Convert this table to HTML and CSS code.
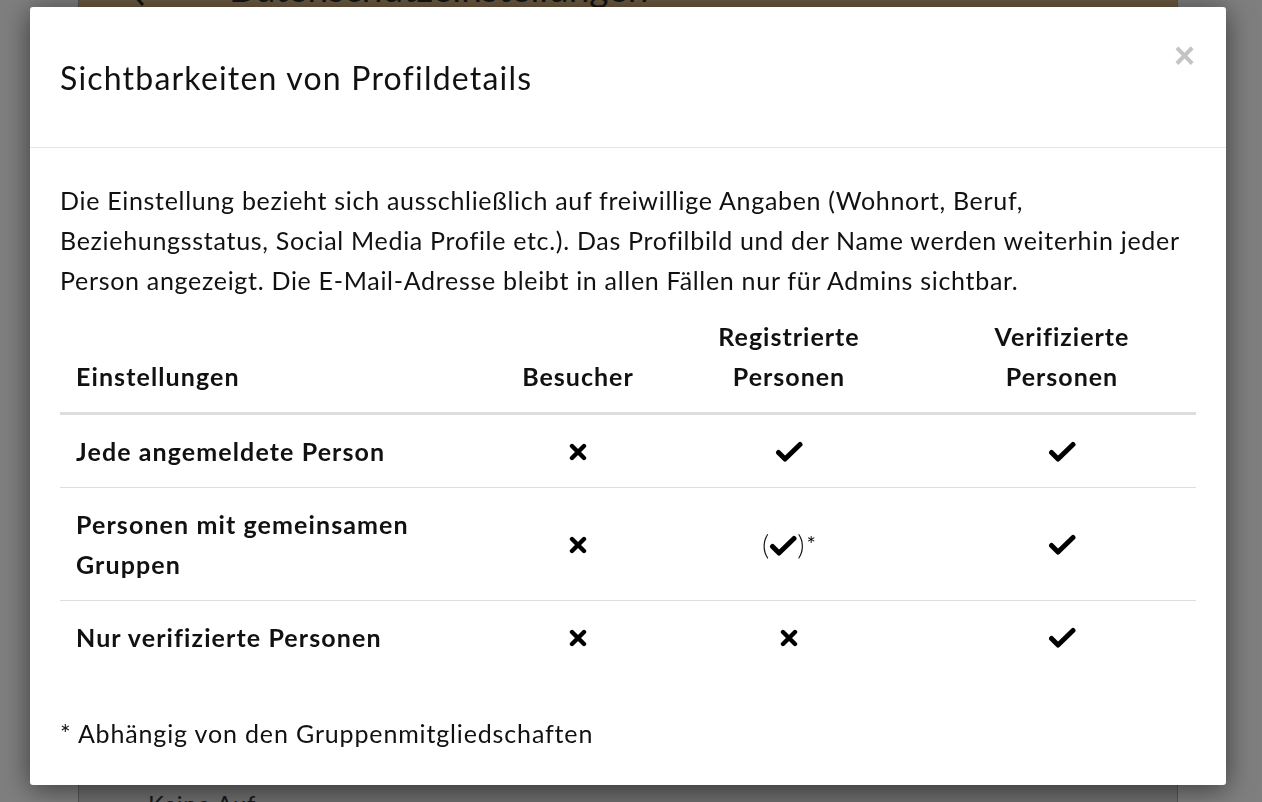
FILE: index.html
```html
<!DOCTYPE html>
<html lang="de">
<head>
<meta charset="utf-8">
<title>Sichtbarkeiten von Profildetails</title>
<link rel="stylesheet" href="styles.css">
</head>
<body>
<div class="page">
  <div class="page-card">
    <div class="page-head">
      <svg class="back" viewBox="0 0 24 40"><path d="M20 3L5 20L20 37"/></svg>
      <span class="page-title">Datenschutzeinstellungen</span>
    </div>
    <div class="page-body">
      <div class="page-row">Keine Auf</div>
    </div>
  </div>
</div>

<div class="modal">
  <div class="modal-header">
    <h4 class="modal-title">Sichtbarkeiten von Profildetails</h4>
    <button class="close" type="button">×</button>
  </div>
  <div class="modal-body">
    <p class="intro">Die Einstellung bezieht sich ausschließlich auf freiwillige Angaben (Wohnort, Beruf,<br>Beziehungsstatus, Social Media Profile etc.). Das Profilbild und der Name werden weiterhin jeder<br>Person angezeigt. Die E-Mail-Adresse bleibt in allen Fällen nur für Admins sichtbar.</p>
    <table class="vis-table">
      <thead>
        <tr>
          <th class="c1">Einstellungen</th>
          <th class="c2">Besucher</th>
          <th class="c3">Registrierte<br>Personen</th>
          <th class="c4">Verifizierte<br>Personen</th>
        </tr>
      </thead>
      <tbody>
        <tr>
          <td class="label">Jede angemeldete Person</td>
          <td><svg class="ic-x" viewBox="0 0 18 18"><path d="M3 3L15 15M15 3L3 15"/></svg></td>
          <td><svg class="ic-ok" viewBox="0 0 28 22"><path d="M3.5 11.5L10 18L25 3.5"/></svg></td>
          <td><svg class="ic-ok" viewBox="0 0 28 22"><path d="M3.5 11.5L10 18L25 3.5"/></svg></td>
        </tr>
        <tr>
          <td class="label">Personen mit gemeinsamen<br>Gruppen</td>
          <td><svg class="ic-x" viewBox="0 0 18 18"><path d="M3 3L15 15M15 3L3 15"/></svg></td>
          <td><span class="paren">(</span><svg class="ic-ok" viewBox="0 0 28 22"><path d="M3.5 11.5L10 18L25 3.5"/></svg><span class="paren">)</span><span class="star">*</span></td>
          <td><svg class="ic-ok" viewBox="0 0 28 22"><path d="M3.5 11.5L10 18L25 3.5"/></svg></td>
        </tr>
        <tr>
          <td class="label">Nur verifizierte Personen</td>
          <td><svg class="ic-x" viewBox="0 0 18 18"><path d="M3 3L15 15M15 3L3 15"/></svg></td>
          <td><svg class="ic-x" viewBox="0 0 18 18"><path d="M3 3L15 15M15 3L3 15"/></svg></td>
          <td><svg class="ic-ok" viewBox="0 0 28 22"><path d="M3.5 11.5L10 18L25 3.5"/></svg></td>
        </tr>
      </tbody>
    </table>
    <p class="note">* Abhängig von den Gruppenmitgliedschaften</p>
  </div>
</div>
</body>
</html>
```

FILE: styles.css
```css
html, body {
  margin: 0;
  padding: 0;
  height: 100%;
  overflow: hidden;
}
body {
  background: #7f7f7f;
  font-family: "Source Sans Pro", Lato, "Liberation Sans", sans-serif;
  color: #111;
}
.page {
  padding-left: 78px;
  width: 1100px;
}
.page-card {
  height: 802px;
  overflow: hidden;
  background: #6f6f6f;
  border-left: 1px solid #555;
  border-right: 1px solid #555;
  box-sizing: border-box;
}
.page-head {
  background: #6c5a41;
  height: 120px;
  margin-top: -112px;
  padding-top: 80px;
  box-sizing: border-box;
  display: flex;
  align-items: flex-start;
  font-size: 37px;
  line-height: 40px;
  color: #151515;
}
.back {
  width: 24px;
  height: 40px;
  margin: 0 0 0 44px;
  fill: none;
  stroke: #151515;
  stroke-width: 3;
}
.page-title {
  margin-left: 82px;
}
.page-body {
  padding: 0 0 0 69px;
}
.page-row {
  margin-top: 776px;
  font-size: 24px;
  line-height: 40px;
  color: #1a1a1a;
  letter-spacing: 0.6px;
}

.modal {
  position: fixed;
  left: 30px;
  top: 7px;
  width: 1196px;
  height: 778px;
  background: #fff;
  border-radius: 3px;
  box-shadow: 0 4px 28px rgba(0, 0, 0, 0.55);
  box-sizing: border-box;
}
.modal-header {
  position: relative;
  height: 141px;
  border-bottom: 1px solid #e5e5e5;
  box-sizing: border-box;
  padding: 50px 30px 0 30px;
}
.modal-title {
  margin: 0;
  font-size: 32px;
  font-weight: 400;
  line-height: 42px;
  letter-spacing: 1.2px;
  color: #111;
}
.close {
  position: absolute;
  right: 31px;
  top: 30px;
  border: 0;
  background: none;
  padding: 0;
  font-family: "Liberation Sans", sans-serif;
  font-size: 36px;
  font-weight: 700;
  line-height: 38px;
  color: #c4c4c4;
}
.modal-body {
  padding: 32px 30px 30px 30px;
  font-size: 25px;
  line-height: 40px;
  letter-spacing: 0.7px;
}
.intro {
  margin: 0;
  white-space: nowrap;
}
.vis-table {
  width: 1136px;
  border-collapse: collapse;
}
.vis-table th, .vis-table td {
  padding: 16px;
  line-height: 40px;
  text-align: center;
  vertical-align: middle;
}
.vis-table th {
  font-weight: 700;
  vertical-align: bottom;
  letter-spacing: 1px;
  border-bottom: 3px solid #dddddd;
}
.vis-table td {
  border-top: 1px solid #dddddd;
}
.vis-table tbody tr:first-child td {
  border-top: 0;
}
.vis-table th.c1, .vis-table td.label {
  text-align: left;
  font-weight: 700;
  letter-spacing: 1.1px;
}
.c1 { width: 414px; }
.c2 { width: 112px; }
.c3 { width: 246px; }
.c4 { width: 236px; }

.ic-x, .ic-ok {
  display: inline-block;
  fill: none;
  stroke: #000;
}
.ic-x {
  width: 18px;
  height: 18px;
  vertical-align: 0;
  stroke-width: 4.4;
  stroke-linecap: round;
}
.ic-ok {
  width: 28px;
  height: 22px;
  vertical-align: -2px;
  stroke-width: 5;
  stroke-linecap: round;
  stroke-linejoin: round;
}
.paren {
  font-weight: 300;
  font-size: 28px;
  letter-spacing: 0;
}
.star {
  font-size: 22px;
  font-weight: 400;
  letter-spacing: 0;
  margin-left: 2px;
  vertical-align: 3px;
}
.note {
  margin: 40px 0 0 0;
  letter-spacing: 0.85px;
}
```
